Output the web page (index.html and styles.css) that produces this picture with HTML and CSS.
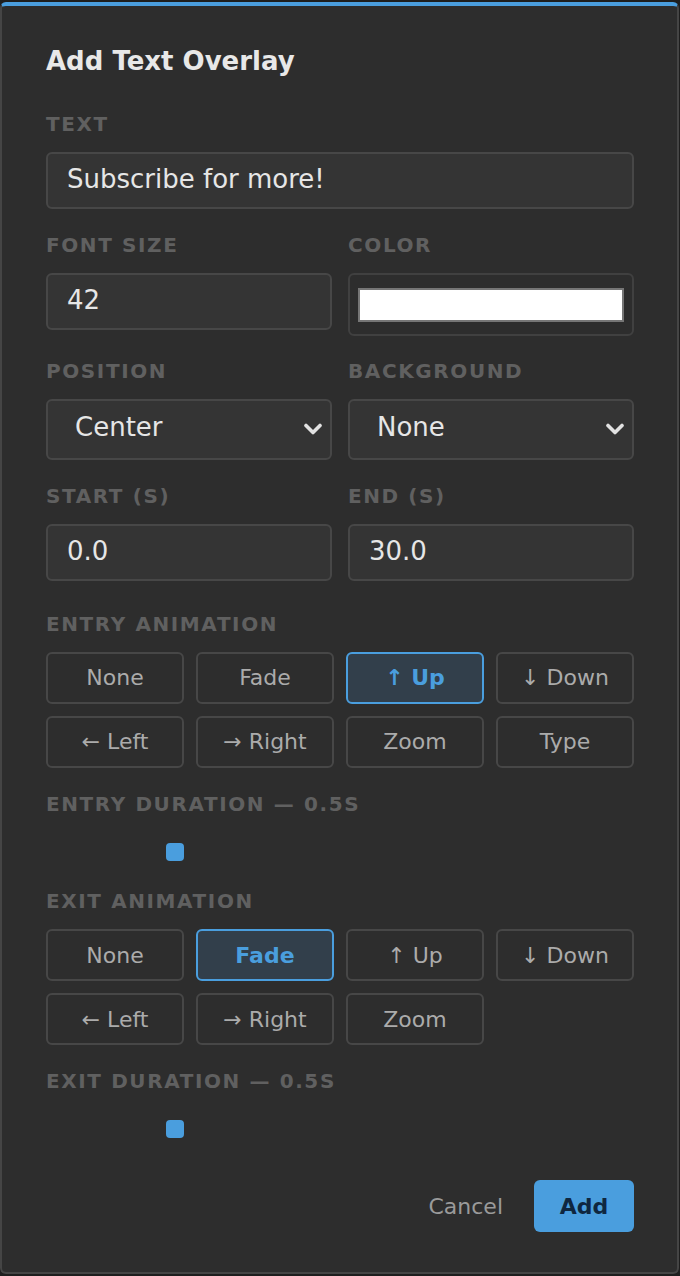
FILE: index.html
```html
<!DOCTYPE html>
<html lang="en">
<head>
    <meta charset="UTF-8">
    <meta name="viewport" content="width=device-width, initial-scale=1.0">
    <title>Add Text Overlay</title>
    <link rel="stylesheet" href="styles.css">
</head>
<body>
    <!-- Overlay editor dialog -->
    <div class="dialog">
        <h2 class="dialog-title">Add Text Overlay</h2>

        <div class="field">
            <label class="field-label" for="overlayText">Text</label>
            <input class="text-input" type="text" id="overlayText" value="Subscribe for more!">
        </div>

        <div class="field-row">
            <div>
                <label class="field-label" for="fontSize">Font Size</label>
                <input class="text-input" type="text" id="fontSize" value="42">
            </div>
            <div>
                <label class="field-label">Color</label>
                <div class="color-box"><span class="color-swatch"></span></div>
            </div>
        </div>

        <div class="field-row">
            <div>
                <label class="field-label">Position</label>
                <div class="select-box">
                    <span class="select-value">Center</span>
                    <svg class="chevron" width="18" height="12" viewBox="0 0 18 12"><path d="M2 2.5 L9 9.5 L16 2.5" fill="none" stroke="#e2e2e2" stroke-width="3.6" stroke-linecap="round" stroke-linejoin="round"/></svg>
                </div>
            </div>
            <div>
                <label class="field-label">Background</label>
                <div class="select-box">
                    <span class="select-value">None</span>
                    <svg class="chevron" width="18" height="12" viewBox="0 0 18 12"><path d="M2 2.5 L9 9.5 L16 2.5" fill="none" stroke="#e2e2e2" stroke-width="3.6" stroke-linecap="round" stroke-linejoin="round"/></svg>
                </div>
            </div>
        </div>

        <div class="field-row field-row-last">
            <div>
                <label class="field-label" for="startTime">Start (s)</label>
                <input class="text-input" type="text" id="startTime" value="0.0">
            </div>
            <div>
                <label class="field-label" for="endTime">End (s)</label>
                <input class="text-input" type="text" id="endTime" value="30.0">
            </div>
        </div>

        <!-- Entry animation -->
        <label class="field-label">Entry Animation</label>
        <div class="anim-grid">
            <button class="anim-btn">None</button>
            <button class="anim-btn">Fade</button>
            <button class="anim-btn active">↑ Up</button>
            <button class="anim-btn">↓ Down</button>
            <button class="anim-btn">← Left</button>
            <button class="anim-btn">→ Right</button>
            <button class="anim-btn">Zoom</button>
            <button class="anim-btn">Type</button>
        </div>

        <label class="field-label">Entry Duration — 0.5s</label>
        <div class="slider" style="--value: 0.5"><span class="slider-thumb"></span></div>

        <!-- Exit animation -->
        <label class="field-label">Exit Animation</label>
        <div class="anim-grid">
            <button class="anim-btn">None</button>
            <button class="anim-btn active">Fade</button>
            <button class="anim-btn">↑ Up</button>
            <button class="anim-btn">↓ Down</button>
            <button class="anim-btn">← Left</button>
            <button class="anim-btn">→ Right</button>
            <button class="anim-btn">Zoom</button>
        </div>

        <label class="field-label">Exit Duration — 0.5s</label>
        <div class="slider" style="--value: 0.5"><span class="slider-thumb"></span></div>

        <div class="dialog-actions">
            <button class="btn-cancel">Cancel</button>
            <button class="btn-add">Add</button>
        </div>
    </div>
</body>
</html>
```

FILE: styles.css
```css
/* Page */
body {
    margin: 0;
    padding-top: 2px;
    background-color: #1e1e1e;
    font-family: "DejaVu Sans", Verdana, sans-serif;
}

/* Dialog shell */
.dialog {
    box-sizing: border-box;
    width: 679px;
    background-color: #2d2d2d;
    border: 2px solid #454545;
    border-top: 4px solid #4a9ede;
    border-radius: 6px;
    padding: 40px 43px 40px 44px;
}

.dialog-title {
    margin: 0 0 37px;
    font-size: 26px;
    line-height: 30px;
    font-weight: bold;
    color: #e8e8e8;
}

/* Labels */
.field-label {
    display: block;
    margin-bottom: 16px;
    font-size: 20px;
    line-height: 23px;
    font-weight: bold;
    letter-spacing: 1.6px;
    text-transform: uppercase;
    color: #606060;
}

.field {
    margin-bottom: 24.5px;
}

.field-row {
    display: grid;
    grid-template-columns: 1fr 1fr;
    gap: 16px;
    margin-bottom: 24.5px;
}

.field-row-last {
    margin-bottom: 32px;
}

/* Text inputs */
.text-input {
    box-sizing: border-box;
    display: block;
    width: 100%;
    height: 57px;
    padding: 0 19px 3px;
    background-color: #343434;
    border: 2px solid #474747;
    border-radius: 6px;
    font-family: inherit;
    font-size: 26px;
    color: #e6e6e6;
    outline: none;
}

/* Colour picker */
.color-box {
    box-sizing: border-box;
    height: 63px;
    padding: 13px 8px 12px;
    border: 2px solid #404040;
    border-radius: 6px;
}

.color-swatch {
    box-sizing: border-box;
    display: block;
    height: 34px;
    background-color: #ffffff;
    border: 2px solid #767676;
}

/* Select boxes */
.select-box {
    box-sizing: border-box;
    display: flex;
    align-items: center;
    justify-content: space-between;
    height: 61px;
    padding: 0 8px 0 27px;
    background-color: #343434;
    border: 2px solid #474747;
    border-radius: 6px;
    font-size: 26px;
    color: #e6e6e6;
}

.select-value {
    padding-bottom: 6px;
}

.chevron {
    margin-bottom: 2px;
}

/* Animation choices */
.anim-grid {
    display: grid;
    grid-template-columns: repeat(4, 1fr);
    gap: 12px;
    margin-bottom: 25px;
}

.anim-btn {
    box-sizing: border-box;
    height: 52px;
    padding: 0;
    background-color: transparent;
    border: 2px solid #474747;
    border-radius: 6px;
    font-family: inherit;
    font-size: 22px;
    color: #ababab;
    cursor: pointer;
}

.anim-btn.active {
    background-color: #323f4b;
    border-color: #4a9ede;
    color: #4a9ede;
    font-weight: bold;
}

/* Duration slider */
.slider {
    position: relative;
    width: 258px;
    height: 40px;
    margin-bottom: 18.5px;
}

.slider-thumb {
    position: absolute;
    top: 11px;
    left: calc((100% - 18px) * var(--value));
    width: 18px;
    height: 18px;
    border-radius: 4px;
    background-color: #4a9ede;
}

/* Footer buttons */
.dialog-actions {
    display: flex;
    justify-content: flex-end;
    align-items: center;
    gap: 12px;
    margin-top: 31px;
}

.btn-cancel {
    height: 52px;
    padding: 0 19px;
    background: none;
    border: none;
    font-family: inherit;
    font-size: 22px;
    color: #9a9a9a;
    cursor: pointer;
}

.btn-add {
    width: 100px;
    height: 52px;
    padding: 0;
    background-color: #4a9ede;
    border: none;
    border-radius: 6px;
    font-family: inherit;
    font-size: 22px;
    font-weight: bold;
    color: #0f2740;
    cursor: pointer;
}
```
